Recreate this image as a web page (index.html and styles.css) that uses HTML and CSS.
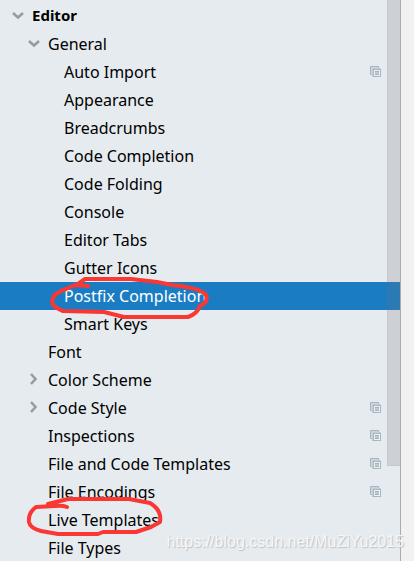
FILE: index.html
```html
<!DOCTYPE html>
<html lang="en">
<head>
<meta charset="utf-8">
<meta name="viewport" content="width=device-width, initial-scale=1">
<title>Settings</title>
<link rel="stylesheet" href="styles.css">
</head>
<body>
<svg class="defs" aria-hidden="true">
  <symbol id="down" viewBox="0 0 12 12"><path d="M1 4L6 8.5L11 4" fill="none" stroke="#999c9f" stroke-width="2.6"/></symbol>
  <symbol id="right" viewBox="0 0 12 12"><path d="M3 1L7.5 6L3 11" fill="none" stroke="#999c9f" stroke-width="2.6"/></symbol>
  <symbol id="copy" viewBox="0 0 11 11">
    <path d="M.5 8.5V.5H8.5V2M.5 8.5H2" fill="none" stroke="#a8b6c0"/>
    <path d="M1.5 7.5V1.5H8" fill="none" stroke="#cbd5dc"/>
    <rect x="2" y="2" width="9" height="9" fill="#c3ced6"/>
    <rect x="3.5" y="3.5" width="7" height="7" fill="#edf2f5" stroke="#a8b6c0"/>
    <path d="M5 5.5H9M5 8.5H9" stroke="#a3b1bb"/>
    <path d="M5 7H9" stroke="#bdc8d0" stroke-width="2"/>
  </symbol>
</svg>
<div class="window">
  <nav class="panel" aria-label="Settings">
    <ul class="tree">
      <li><button class="row root"><svg class="arrow"><use href="#down"/></svg><span class="label">Editor</span></button></li>
      <li><button class="row"><svg class="arrow"><use href="#down"/></svg><span class="label">General</span></button></li>
      <li><button class="row leaf"><span class="label">Auto Import</span><svg class="copy"><use href="#copy"/></svg></button></li>
      <li><button class="row leaf"><span class="label">Appearance</span></button></li>
      <li><button class="row leaf"><span class="label">Breadcrumbs</span></button></li>
      <li><button class="row leaf"><span class="label">Code Completion</span></button></li>
      <li><button class="row leaf"><span class="label">Code Folding</span></button></li>
      <li><button class="row leaf"><span class="label">Console</span></button></li>
      <li><button class="row leaf"><span class="label">Editor Tabs</span></button></li>
      <li><button class="row leaf"><span class="label">Gutter Icons</span></button></li>
      <li class="marked"><button class="row leaf selected" aria-current="true"><span class="label">Postfix Completion</span></button>
        <svg class="mark mark-postfix" viewBox="0 0 162 46" aria-hidden="true"><path d="M39 8L26 7L17 11Q4 15 3 23Q3 29 14 33L55 34L75 39H139Q148 36 151 28Q160 24 157 17Q152 10 123 7L108 4L82 1H36L29 6"/></svg></li>
      <li><button class="row leaf"><span class="label">Smart Keys</span></button></li>
      <li><button class="row"><span class="arrow"></span><span class="label">Font</span></button></li>
      <li><button class="row"><svg class="arrow"><use href="#right"/></svg><span class="label">Color Scheme</span></button></li>
      <li><button class="row"><svg class="arrow"><use href="#right"/></svg><span class="label">Code Style</span><svg class="copy"><use href="#copy"/></svg></button></li>
      <li><button class="row"><span class="arrow"></span><span class="label">Inspections</span><svg class="copy"><use href="#copy"/></svg></button></li>
      <li><button class="row"><span class="arrow"></span><span class="label">File and Code Templates</span><svg class="copy"><use href="#copy"/></svg></button></li>
      <li><button class="row"><span class="arrow"></span><span class="label">File Encodings</span><svg class="copy"><use href="#copy"/></svg></button></li>
      <li class="marked"><button class="row"><span class="arrow"></span><span class="label">Live Templates</span></button>
        <svg class="mark mark-live" viewBox="0 0 140 42" aria-hidden="true"><path d="M41 9Q36 7 29 8L10 9Q2 15 3 24Q4 30 15 33L32 36H72L77 34H110L125 29L134 24Q136 12 124 5L103 1H42L22 6"/></svg></li>
      <li><button class="row"><span class="arrow"></span><span class="label">File Types</span></button></li>
    </ul>
    <div class="thumb"></div>
  </nav>
  <div class="content"></div>
  <span class="watermark">https://blog.csdn.net/MuZiYu2015</span>
</div>
</body>
</html>
```
FILE: styles.css
```css
* {
  box-sizing: border-box;
}

body {
  margin: 0;
  background: #f1f1f1;
  font-family: "Noto Sans", sans-serif;
  font-size: 16px;
  color: #000;
}

.defs {
  position: absolute;
  width: 0;
  height: 0;
}

.window {
  position: relative;
  display: flex;
  height: 100vh;
  overflow: hidden;
}

.panel {
  position: relative;
  flex: 1;
  padding-top: 2px;
  background: #e6ebef;
  border-right: 1px solid #a9abad;
}

.content {
  width: 13px;
}

.tree {
  list-style: none;
  margin: 0;
  padding: 0;
}

.marked {
  position: relative;
}

.row {
  display: flex;
  align-items: center;
  gap: 8px;
  width: 100%;
  height: 28px;
  padding: 0 19px 2px 28px;
  border: 0;
  background: none;
  color: inherit;
  font: inherit;
  text-align: left;
}

.leaf {
  padding-left: 64px;
}

.selected {
  background: #1a7dc4;
  color: #fff;
}

.arrow {
  width: 12px;
  height: 12px;
  flex: none;
}

.label {
  flex: 1;
  padding-top: 2px;
  white-space: nowrap;
}

.root {
  padding-left: 12px;
  font-size: 15px;
  font-weight: bold;
}

.root .label {
  padding-top: 0;
}

.copy {
  width: 11px;
  height: 11px;
  flex: none;
}

.thumb {
  position: absolute;
  top: 0;
  right: 0;
  width: 13px;
  height: 83%;
  background: rgba(115, 115, 120, 0.21);
  border: solid rgba(115, 115, 120, 0.1);
  border-width: 0 0 1px 1px;
}

.mark {
  position: absolute;
  z-index: 1;
  fill: none;
  stroke: #fa3732;
  stroke-width: 4;
  stroke-linecap: round;
  stroke-linejoin: round;
  overflow: visible;
  pointer-events: none;
}

.mark-postfix {
  left: 49px;
  top: -4px;
  width: 162px;
  height: 46px;
}

.mark-live {
  left: 26px;
  top: -8px;
  width: 140px;
  height: 42px;
}

.watermark {
  position: absolute;
  right: 10px;
  bottom: 9px;
  font: 16px/20px "Liberation Sans", sans-serif;
  color: #f5f7f8;
  text-shadow: 1px 1px 1px #bcc0c4;
}
```
